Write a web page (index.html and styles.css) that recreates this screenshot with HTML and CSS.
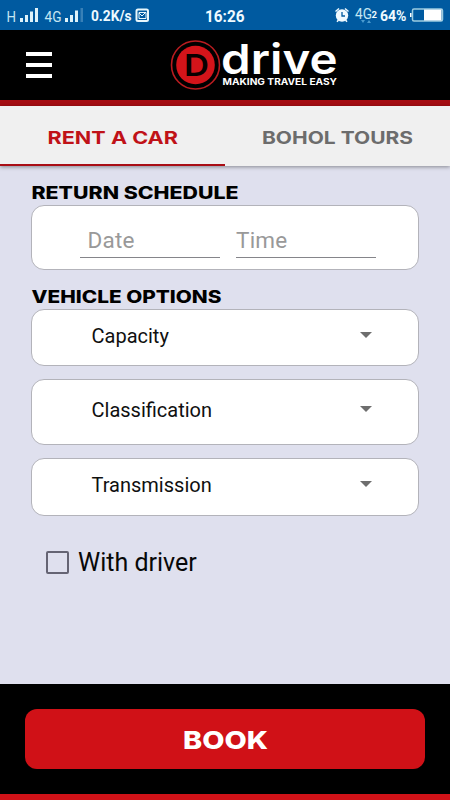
FILE: index.html
```html
<!DOCTYPE html>
<html lang="en">
<head>
<meta charset="utf-8">
<title>Drive - Making Travel Easy</title>
<link rel="stylesheet" href="styles.css">
</head>
<body>
<div class="app">
  <div class="status">
    <svg width="450" height="30" viewBox="0 0 450 30">
      <g class="thin">
        <text x="6.500" y="22" font-size="14.500" textLength="9.500" lengthAdjust="spacingAndGlyphs">H</text>
        <text x="44.500" y="22" font-size="14.500" textLength="17" lengthAdjust="spacingAndGlyphs">4G</text>
        <text x="355" y="18.500" font-size="14.500" textLength="17" lengthAdjust="spacingAndGlyphs">4G</text>
      </g>
      <g fill="#def2fa">
        <path d="M20 18h3v4h-3zM25 15h3v7h-3zM30 11.500h3v10.500h-3zM35 8h3v14h-3z"/>
        <path d="M65 18h3v4h-3zM70 15h3v7h-3zM75 10.500h3v11.500h-3z"/>
        <path d="M80.500 8h2.500v14h-2.500z" opacity=".25"/>
      </g>
      <g class="strong">
        <text x="91" y="20.500" font-size="14" textLength="40.500" lengthAdjust="spacingAndGlyphs">0.2K/s</text>
        <text x="205" y="21.500" font-size="16" textLength="39.500" lengthAdjust="spacingAndGlyphs">16:26</text>
        <text x="371.500" y="18" font-size="9" textLength="5.500" lengthAdjust="spacingAndGlyphs">2</text>
        <text x="380" y="21" font-size="14" textLength="26.500" lengthAdjust="spacingAndGlyphs">64%</text>
      </g>
      <rect x="136.500" y="9.500" width="11.500" height="11.500" rx="1.500" fill="none" stroke="#e8f7fc" stroke-width="2"/>
      <path d="M139 12.500h7v6h-7zM139 13l3 3 4-4" fill="none" stroke="#e8f7fc" stroke-width="1"/>
      <circle cx="342" cy="15.500" r="6.200" fill="#eef9ff"/>
      <path d="M335.500 11.500l3.500-3M345 8.500l3.500 3M338.500 20l-1.500 1.800M345.500 20l1.500 1.800" fill="none" stroke="#eef9ff" stroke-width="1.500"/>
      <path d="M342 12v4h3" fill="none" stroke="#005aa0" stroke-width="1.300"/>
      <path d="M361 20h4l-2 3zM367 23h4l-2-3z" fill="#4b9bd0"/>
      <rect x="412.500" y="9" width="30" height="12" rx="1.500" fill="none" stroke="#9bcbe0" stroke-width="1.500"/>
      <path d="M424 9.500h17.500v11H424zM410 13h1.500v4H410z" fill="#fff"/>
    </svg>
  </div>

  <header class="header">
    <button class="menu" aria-label="Menu"><span></span><span></span><span></span></button>
    <svg class="brand" width="170" height="52" viewBox="0 0 170 52">
      <circle cx="25.500" cy="26" r="24" fill="none" stroke="#b81c20" stroke-width="1.600"/>
      <circle cx="25.500" cy="26" r="19.300" fill="#d4141a"/>
      <text class="mark" x="14" y="36.800" textLength="25" lengthAdjust="spacingAndGlyphs">D</text>
      <text class="name" x="51" y="34.800" textLength="116.500" lengthAdjust="spacingAndGlyphs">drive</text>
      <text class="slogan" x="52.500" y="46" textLength="114.500" lengthAdjust="spacingAndGlyphs">MAKING TRAVEL EASY</text>
    </svg>
  </header>

  <nav class="tabs">
    <a class="tab active"><svg width="132" height="20"><text x="0.500" y="16.500" textLength="130.500" lengthAdjust="spacingAndGlyphs">RENT A CAR</text></svg></a>
    <a class="tab"><svg width="152" height="20"><text x="0" y="16.500" textLength="151" lengthAdjust="spacingAndGlyphs">BOHOL TOURS</text></svg></a>
  </nav>

  <main class="content">
    <h2 class="heading"><svg width="220" height="19"><text x="-0.500" y="15.500" textLength="207" lengthAdjust="spacingAndGlyphs">RETURN SCHEDULE</text></svg></h2>
    <section class="card schedule">
      <div class="field date">Date</div>
      <div class="field">Time</div>
    </section>

    <h2 class="heading options"><svg width="220" height="19"><text x="-0.500" y="15.500" textLength="190" lengthAdjust="spacingAndGlyphs">VEHICLE OPTIONS</text></svg></h2>
    <div class="selects">
      <div class="card select"><span>Capacity</span><i class="caret"></i></div>
      <div class="card select tall"><span>Classification</span><i class="caret"></i></div>
      <div class="card select"><span>Transmission</span><i class="caret"></i></div>
    </div>

    <label class="driver"><span class="box"></span><span>With driver</span></label>
  </main>

  <footer class="footer">
    <button class="book"><svg width="86" height="28"><text x="1" y="23.500" textLength="85" lengthAdjust="spacingAndGlyphs">BOOK</text></svg></button>
  </footer>
</div>
</body>
</html>
```
FILE: styles.css
```css
* { box-sizing: border-box; }
body { margin: 0; }
svg { display: block; overflow: visible; }

.app {
  width: 450px;
  height: 800px;
  display: flex;
  flex-direction: column;
  overflow: hidden;
  background: #dfe0ee;
  font-family: Roboto, sans-serif;
}

.status { height: 30px; background: #005aa0; }
.thin { fill: #c4e6f2; }
.strong { fill: #effaff; font-weight: 700; }

.header {
  height: 76px;
  display: flex;
  align-items: flex-start;
  background: #000;
  border-bottom: 6px solid #a50d12;
}
.menu {
  width: 26px;
  margin: 22px 0 0 26px;
  padding: 0;
  border: 0;
  background: none;
  display: grid;
  gap: 6.500px;
}
.menu span { height: 4.300px; background: #fff; }
.brand { margin: 9px 0 0 118px; font-family: Inter, sans-serif; }
.mark { font-size: 30px; font-weight: 600; fill: #080000; }
.name { font-size: 41px; font-weight: 600; fill: #fff; }
.slogan { font-size: 9px; font-weight: 700; fill: #fff; }

.tabs {
  height: 60px;
  display: flex;
  flex: none;
  background: #f0f0f0;
  box-shadow: 0 1px 4px rgba(0, 0, 0, .4);
  position: relative;
}
.tab {
  width: 225px;
  display: flex;
  justify-content: center;
  padding-top: 21px;
  font: 700 17.500px Inter, sans-serif;
  fill: #6c6c6c;
}
.tab.active { fill: #c01218; border-bottom: 2px solid #a90e15; }

.content { flex: 1; padding: 17px 31px 0; }
.heading {
  height: 19px;
  margin: 0 0 3px 1px;
  font: 800 17px Inter, sans-serif;
  fill: #000;
}
.heading.options { margin-top: 17px; }
.card {
  background: #fff;
  border: 1px solid #b3b3ba;
  border-radius: 13px;
}
.schedule {
  height: 65px;
  display: flex;
  gap: 16px;
  padding: 14px 0 0 48px;
}
.field {
  width: 140px;
  height: 38px;
  border-bottom: 1px solid #85858a;
  color: #999;
  font-size: 22.500px;
  line-height: 41px;
  letter-spacing: .2px;
}
.date { padding-left: 7.500px; }
.selects { display: grid; gap: 13px; }
.select {
  height: 58px;
  display: flex;
  align-items: flex-start;
  justify-content: space-between;
  padding: 14px 46px 0 59.500px;
  color: #101010;
  font-size: 20px;
  line-height: 25px;
}
.select:first-child { height: 57px; }
.select.tall { height: 66px; padding-top: 18px; }
.caret {
  margin-top: 8px;
  border: 6px solid transparent;
  border-top-color: #6e6e6e;
  border-bottom: 0;
}
.driver {
  display: flex;
  align-items: center;
  gap: 9px;
  height: 32px;
  margin: 30px 0 0 15px;
  color: #080808;
  font-size: 25px;
}
.box { width: 23px; height: 23px; border: 2px solid #656473; border-radius: 2px; }

.footer {
  height: 116px;
  padding: 25px 25px 0;
  background: #000;
  border-bottom: 6px solid #d01218;
}
.book {
  width: 400px;
  height: 60px;
  display: flex;
  align-items: center;
  justify-content: center;
  padding: 0;
  border: 0;
  border-radius: 12px;
  background: #d01117;
  font: 800 25px Inter, sans-serif;
  fill: #fff;
}
```
